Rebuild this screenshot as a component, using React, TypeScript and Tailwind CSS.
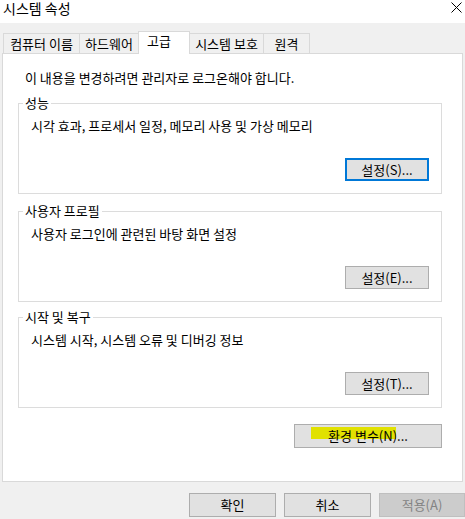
import React from 'react'

const font = { fontFamily: '"Noto Sans CJK KR", "Noto Sans", sans-serif' }

const tabs = [
  { label: '컴퓨터 이름', w: 'w-[77px]' },
  { label: '하드웨어', w: 'w-[60px]' },
  { label: '고급', w: 'w-[52px]', active: true },
  { label: '시스템 보호', w: 'w-[75px]' },
  { label: '원격', w: 'w-[47px]' },
]

const Btn = ({ children, focused, className = '' }: { children: React.ReactNode; focused?: boolean; className?: string }) => (
  <div
    className={`flex h-[23px] w-[84px] items-center justify-center bg-[#e1e1e1] text-[13px] leading-[16px] text-black ${
      focused ? 'border-2 border-[#0078d7]' : 'border border-[#adadad]'
    } ${className}`}
  >
    {children}
  </div>
)

const Group = ({ title, desc, button, focused, className = '' }: { title: string; desc: string; button: string; focused?: boolean; className?: string }) => (
  <div className={`relative flex h-[91px] flex-col border border-[#dcdcdc] ${className}`}>
    <span className="absolute left-[4px] top-[-9px] bg-white px-[2px] text-[13px] leading-[16px]">{title}</span>
    <div className="pl-[12px] pt-[14px] text-[13px] leading-[16px]">{desc}</div>
    <div className="mt-[24px] flex justify-end pr-[12px]">
      <Btn focused={focused}>{button}</Btn>
    </div>
  </div>
)

export default function App() {
  return (
    <div className="flex h-[519px] w-[465px] flex-col overflow-hidden bg-[#f0f0f0] text-black" style={font}>
      {/* title bar */}
      <div className="flex h-[23px] shrink-0 items-start justify-between bg-white pt-[2px]">
        <span className="ml-[3px] text-[14px] leading-[12px]">시스템 속성</span>
        <svg className="mr-[3px]" width="11" height="11" viewBox="0 0 11 11">
          <path d="M0.5 0.5 L10.5 10.5 M10.5 0.5 L0.5 10.5" stroke="#000" strokeWidth="1" />
        </svg>
      </div>

      {/* tabs */}
      <div className="relative z-10 -mb-px mt-[8px] flex h-[23px] items-end pl-[3px]">
        {tabs.map((t, i) =>
          t.active ? (
            <div
              key={t.label}
              className={`${t.w} -ml-px flex h-[23px] items-start border-x border-t border-[#d9d9d9] bg-white pl-[8px] pt-[1px] text-[13px] leading-[16px]`}
            >
              {t.label}
            </div>
          ) : (
            <div
              key={t.label}
              className={`${t.w} ${i === 0 ? '' : '-ml-px'} mb-px flex h-[20px] items-center justify-center border-x border-t border-[#d9d9d9] bg-[#f0f0f0] text-[13px] leading-[16px]`}
            >
              {t.label}
            </div>
          )
        )}
      </div>

      {/* panel */}
      <div className="ml-[2px] flex h-[429px] w-[461px] shrink-0 flex-col border border-[#d9d9d9] bg-white">
        <div className="pl-[22px] pt-[16px] text-[13px] leading-[16px]">이 내용을 변경하려면 관리자로 로그온해야 합니다.</div>
        <div className="ml-[15px] w-[424px]">
          <Group className="mt-[17px]" title="성능" desc="시각 효과, 프로세서 일정, 메모리 사용 및 가상 메모리" button="설정(S)..." focused />
          <Group className="mt-[17px]" title="사용자 프로필" desc="사용자 로그인에 관련된 바탕 화면 설정" button="설정(E)..." />
          <Group className="mt-[15px]" title="시작 및 복구" desc="시스템 시작, 시스템 오류 및 디버깅 정보" button="설정(T)..." />
          <div className="mt-[16px] flex justify-end">
            <div className="relative flex h-[24px] w-[148px] items-center justify-center border border-[#adadad] bg-[#e1e1e1] text-[13px] leading-[16px]">
              <div className="absolute left-[16px] top-[2px] h-[12px] w-[85px] bg-[#e1e100]" />
              <span className="relative">환경 변수(N)...</span>
            </div>
          </div>
        </div>
      </div>

      {/* bottom buttons */}
      <div className="mt-[11px] flex justify-end gap-[8px]">
        <div className="flex h-[24px] w-[87px] items-center justify-center border border-[#adadad] bg-[#e1e1e1] text-[13px] leading-[16px]">확인</div>
        <div className="flex h-[24px] w-[87px] items-center justify-center border border-[#adadad] bg-[#e1e1e1] text-[13px] leading-[16px]">취소</div>
        <div className="flex h-[24px] w-[86px] items-center justify-center border border-[#bfbfbf] bg-[#cccccc] text-[13px] leading-[16px] text-[#838383]">적용(A)</div>
      </div>
    </div>
  )
}
